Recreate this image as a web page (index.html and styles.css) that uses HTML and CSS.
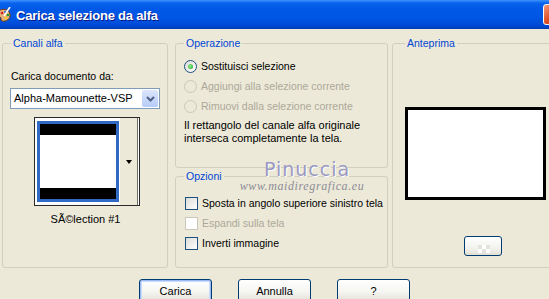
FILE: index.html
```html
<!DOCTYPE html>
<html lang="it">
<head>
  <meta charset="UTF-8" />
  <meta name="viewport" content="width=device-width, initial-scale=1.0"/>
  <title>Carica selezione da alfa</title>
  <link rel="stylesheet" href="styles.css">
</head>
<body>
  <div class="window">
    <div class="titlebar">
      <svg class="app-icon" width="14" height="17" viewBox="0 0 14 17">
        <path d="M1 4 C4 1 11 2 12 7 C13 12 8 15 4 14 C2 13 4 11 2 10 C0 9 -1 7 1 4 Z" fill="#e8b07a" stroke="#6b3a12" stroke-width="1"/>
        <circle cx="4" cy="6" r="1.3" fill="#d62020"/>
        <circle cx="7.5" cy="5" r="1.3" fill="#1c5bd8"/>
        <circle cx="10" cy="8" r="1.3" fill="#1a9a2a"/>
        <circle cx="8" cy="11" r="1.3" fill="#f0d020"/>
        <path d="M12 0 L6 9" stroke="#fff" stroke-width="1.6"/>
      </svg>
      <span class="title">Carica selezione da alfa</span>
      <span class="close-btn"></span>
    </div>

    <div class="content">
      <fieldset class="group canali">
        <legend>Canali alfa</legend>
        <div class="field-label">Carica documento da:</div>
        <div class="select">
          <span class="select-text">Alpha-Mamounette-VSP</span>
          <span class="select-arrow">
            <svg width="9" height="6" viewBox="0 0 9 6"><path d="M1 1 L4.5 4.5 L8 1" fill="none" stroke="#4d6185" stroke-width="2"/></svg>
          </span>
        </div>
        <div class="thumb">
          <div class="thumb-img">
            <div class="bar"></div>
            <div class="bar"></div>
          </div>
          <div class="thumb-btn"><span class="tri"></span></div>
        </div>
        <div class="thumb-caption">SÃ©lection #1</div>
      </fieldset>

      <div class="mid">
        <fieldset class="group operazione">
          <legend>Operazione</legend>
          <div class="row"><span class="radio checked"></span>Sostituisci selezione</div>
          <div class="row disabled"><span class="radio"></span>Aggiungi alla selezione corrente</div>
          <div class="row disabled"><span class="radio"></span>Rimuovi dalla selezione corrente</div>
          <p class="note">Il rettangolo del canale alfa originale interseca completamente la tela.</p>
        </fieldset>

        <fieldset class="group opzioni">
          <legend>Opzioni</legend>
          <div class="row"><span class="check"></span>Sposta in angolo superiore sinistro tela</div>
          <div class="row disabled"><span class="check"></span>Espandi sulla tela</div>
          <div class="row"><span class="check"></span>Inverti immagine</div>
        </fieldset>
      </div>

      <fieldset class="group anteprima">
        <legend>Anteprima</legend>
        <div class="preview"></div>
        <button class="small-btn"><span class="checker"></span></button>
      </fieldset>
    </div>

    <div class="actions">
      <button class="btn default">Carica</button>
      <button class="btn">Annulla</button>
      <button class="btn">?</button>
    </div>

    <div class="watermark">
      <div class="wm-name">Pinuccia</div>
      <div class="wm-url">www.maidiregrafica.eu</div>
    </div>
  </div>
</body>
</html>
```

FILE: styles.css
```css
:root {
  --face: #ece9d8;
  --frame: #d0d0bf;
  --legend: #0046d5;
  --disabled: #aca899;
  --xp-border: #003c74;
  --field-border: #7f9db9;
}
html, body {
  margin: 0;
  padding: 0;
}
body {
  width: 549px;
  height: 299px;
  overflow: hidden;
  background: var(--face);
  font-family: 'Liberation Sans', Arial, sans-serif;
  font-size: 10.5px;
  line-height: 13px;
  color: #000;
}
.window {
  position: relative;
  width: 549px;
  height: 299px;
  overflow: hidden;
}

/* title bar */
.titlebar {
  height: 29px;
  display: flex;
  align-items: center;
  background: linear-gradient(to bottom, #3d95ff 0px, #0a63ec 3px, #0058e6 9px, #0055e5 18px, #004bd6 25px, #003cb4 29px);
}
.app-icon {
  margin-left: -2px;
  margin-top: 1px;
  flex: none;
}
.title {
  margin: 2px 0 0 4px;
  color: #fff;
  font-family: 'Liberation Sans', Arial, sans-serif;
  font-weight: bold;
  font-size: 13px;
  letter-spacing: -0.2px;
  text-shadow: 1px 1px 0 #0a1883;
}
.close-btn {
  margin-left: auto;
  margin-right: -15px;
  width: 21px;
  height: 21px;
  box-sizing: border-box;
  border: 1px solid #fff;
  border-radius: 3px;
  background: linear-gradient(135deg, #f39a7b, #e0532b 45%, #c83a14);
}

/* main groups */
.content {
  display: grid;
  grid-template-columns: 166px 213px 170px;
  column-gap: 7px;
  padding: 8px 0 0 2px;
  height: 231px;
}
.content > .anteprima {
  margin-left: -3px;
}
.group {
  margin: 0;
  padding: 0 7px 0 8px;
  min-width: 0;
  border: 1px solid var(--frame);
  border-radius: 3px;
  box-sizing: border-box;
}
.group legend {
  padding: 0 2px;
  margin-left: 0;
  color: var(--legend);
  line-height: 12px;
}
.canali {
  height: 231px;
}
.field-label {
  margin-top: 21px;
}
.select {
  margin: 5px 0 0 -1px;
  width: 150px;
  height: 21px;
  box-sizing: border-box;
  border: 1px solid var(--field-border);
  background: #fff;
  display: flex;
  align-items: center;
  justify-content: space-between;
}
.select-text {
  padding-left: 3px;
  font-size: 11px;
}
.select-arrow {
  width: 16px;
  height: 17px;
  margin-right: 1px;
  border-radius: 2px;
  background: linear-gradient(to bottom, #dce6fd, #b6cbf7);
  display: flex;
  align-items: center;
  justify-content: center;
}
.thumb {
  margin: 8px 0 0 23px;
  width: 106px;
  height: 89px;
  box-sizing: border-box;
  border: 1px solid #2b2b2b;
  background: #fff;
  display: flex;
  padding: 3px 1px 3px 2px;
}
.thumb-img {
  width: 82px;
  box-sizing: border-box;
  border: 3px solid #316ac5;
  background: #fff;
  display: flex;
  flex-direction: column;
  justify-content: space-between;
}
.thumb-img .bar {
  height: 11px;
  background: #000;
}
.thumb-btn {
  flex: 1;
  margin: -3px 0 -3px 0;
  background: var(--face);
  border-left: 1px solid #fff;
  border-right: 1px solid #716f64;
  display: flex;
  align-items: center;
  justify-content: center;
}
.tri {
  width: 0;
  height: 0;
  border-left: 3.5px solid transparent;
  border-right: 3.5px solid transparent;
  border-top: 4px solid #000;
}
.thumb-caption {
  margin-top: 7px;
  text-align: center;
  font-size: 11px;
}

.mid {
  display: flex;
  flex-direction: column;
  gap: 2px;
}
.operazione {
  height: 131px;
}
.opzioni {
  height: 98px;
}
.row {
  height: 20px;
  display: flex;
  align-items: center;
  gap: 4px;
  white-space: nowrap;
}
.operazione .row:first-of-type {
  margin-top: 7px;
}
.opzioni .row {
  margin-left: 1px;
}
.opzioni .row:first-of-type {
  margin-top: 11px;
}
.row.disabled {
  color: var(--disabled);
}
.radio {
  flex: none;
  width: 13px;
  height: 13px;
  box-sizing: border-box;
  border-radius: 50%;
  border: 1px solid #1c5180;
  background: linear-gradient(135deg, #dcdcd7, #fff);
  display: flex;
  align-items: center;
  justify-content: center;
}
.radio.checked::after {
  content: "";
  width: 5px;
  height: 5px;
  border-radius: 50%;
  background: radial-gradient(circle at 40% 40%, #8ef08e, #21a121);
}
.disabled .radio {
  border-color: #cac8bb;
  background: var(--face);
}
.note {
  margin: 3px 0 0 0;
  width: 196px;
  font-size: 11px;
}
.check {
  flex: none;
  width: 13px;
  height: 13px;
  box-sizing: border-box;
  border: 1px solid #1c5180;
  background: linear-gradient(135deg, #dcdcd7, #fff);
}
.disabled .check {
  border-color: #cac8bb;
  background: #fff;
}

.anteprima {
  height: 231px;
  padding-left: 12px;
}
.preview {
  margin-top: 58px;
  width: 141px;
  height: 93px;
  box-sizing: border-box;
  border: 3px solid #000;
  background: #fff;
}
.small-btn {
  display: block;
  margin: 36px 0 0 59px;
  width: 38px;
  height: 20px;
  padding: 0;
  border: 1px solid var(--xp-border);
  border-radius: 3px;
  background: linear-gradient(to bottom, #fff, #f0f0ea 70%, #e2ded3);
  position: relative;
}
.checker {
  position: absolute;
  left: 13px;
  bottom: 2px;
  width: 12px;
  height: 8px;
  background: conic-gradient(#fff 25%, #e4e2dc 0 50%, #fff 0 75%, #e4e2dc 0) 0 0 / 8px 8px;
}

/* bottom buttons */
.actions {
  display: flex;
  justify-content: center;
  gap: 26px;
  padding-top: 11px;
}
.btn {
  width: 73px;
  height: 23px;
  padding: 0;
  font-family: 'Liberation Sans', Arial, sans-serif;
  font-size: 11px;
  color: #000;
  border: 1px solid var(--xp-border);
  border-radius: 3px;
  background: linear-gradient(to bottom, #fff, #f4f4f0 60%, #e3e0d6);
  box-shadow: inset 0 -1px 0 #d6d0c5;
}
.btn.default {
  box-shadow: inset 0 0 0 1px #9cbbf2, inset 0 0 0 2px #c9dcfc;
}

/* watermark over the dialog */
.watermark {
  position: absolute;
  left: 238px;
  top: 159px;
  width: 128px;
  text-align: center;
  pointer-events: none;
}
.wm-name {
  font-family: 'DejaVu Sans', sans-serif;
  font-size: 19px;
  line-height: 20px;
  letter-spacing: 1px;
  color: #9a9ac2;
  text-shadow: 1px 1px 0 #fff;
  padding-left: 10px;
}
.wm-url {
  margin-top: 1px;
  font-family: 'Liberation Serif', serif;
  font-style: italic;
  font-size: 12px;
  letter-spacing: 0.6px;
  color: #8c8c96;
}
```
